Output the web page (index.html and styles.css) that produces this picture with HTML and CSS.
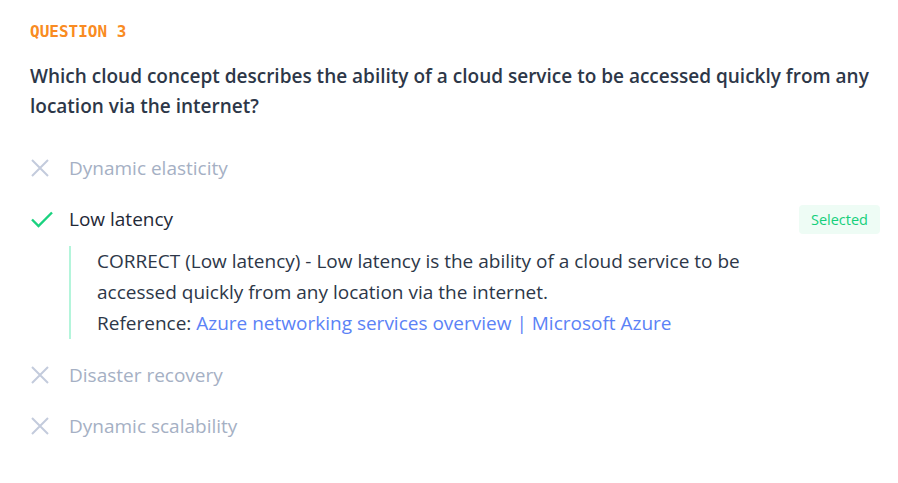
FILE: index.html
```html
<!DOCTYPE html>
<html lang="en">
<head>
<meta charset="utf-8">
<title>Question 3</title>
<link rel="stylesheet" href="styles.css">
</head>
<body>
<main class="question">
  <div class="label">QUESTION 3</div>
  <h2 class="prompt">Which cloud concept describes the ability of a cloud service to be accessed quickly from any location via the internet?</h2>
  <ul class="options">
    <li class="option wrong">
      <div class="row">
        <svg class="icon" viewBox="0 0 20 20"><path d="M2 2 L18 18 M18 2 L2 18" /></svg>
        <span class="text">Dynamic elasticity</span>
      </div>
    </li>
    <li class="option right">
      <div class="row">
        <svg class="icon" viewBox="0 0 24 20"><path d="M2 10.5 L8.5 17 L22 3.5" /></svg>
        <span class="text">Low latency</span>
        <span class="badge">Selected</span>
      </div>
      <div class="explain">
        CORRECT (Low latency) - Low latency is the ability of a cloud service to be<br>
        accessed quickly from any location via the internet.<br>
        Reference: <a href="#">Azure networking services overview | Microsoft Azure</a>
      </div>
    </li>
    <li class="option wrong">
      <div class="row">
        <svg class="icon" viewBox="0 0 20 20"><path d="M2 2 L18 18 M18 2 L2 18" /></svg>
        <span class="text">Disaster recovery</span>
      </div>
    </li>
    <li class="option wrong">
      <div class="row">
        <svg class="icon" viewBox="0 0 20 20"><path d="M2 2 L18 18 M18 2 L2 18" /></svg>
        <span class="text">Dynamic scalability</span>
      </div>
    </li>
  </ul>
</main>
</body>
</html>
```

FILE: styles.css
```css
* { box-sizing: border-box; }
html, body { margin: 0; padding: 0; background: #ffffff; }
body { font-family: "Open Sans", "Noto Sans", sans-serif; color: #2d3748; }

.question { padding: 22px 18px 20px 30px; }

.label {
  font-family: "DejaVu Sans Mono", "Liberation Mono", monospace;
  font-weight: bold;
  font-size: 16px;
  line-height: 20px;
  color: #f98b22;
}

.prompt {
  margin: 19px 0 0 0;
  font-size: 19px;
  font-weight: 600;
  line-height: 30px;
  color: #2d3748;
}

.options { list-style: none; margin: 32px 0 0 0; padding: 0; }
.option { margin-bottom: 21px; }

.row { display: flex; align-items: center; height: 30px; }
.icon { width: 20px; height: 20px; flex: none; fill: none; stroke-width: 2; stroke-linecap: butt; }
.wrong .icon { stroke: #c3cbdc; }
.right .icon { width: 24px; height: 20px; stroke: #1ad27f; stroke-width: 2.4; }
.text { margin-left: 19px; font-size: 19px; }
.right .text { margin-left: 15px; }
.wrong .text { color: #a5b0c4; }
.right .text { color: #1f2937; }

.badge {
  margin-left: auto;
  background: #eefcf5;
  color: #14cf7b;
  font-size: 14.5px;
  line-height: 29px;
  padding: 0 12px;
  border-radius: 4px;
}

.explain {
  margin: 12px 0 0 39px;
  border-left: 2px solid #b4f5db;
  padding: 0 0 0 26px;
  font-size: 19px;
  line-height: 31px;
  color: #2d3748;
}
.explain a { color: #5b82f6; text-decoration: none; }
```
